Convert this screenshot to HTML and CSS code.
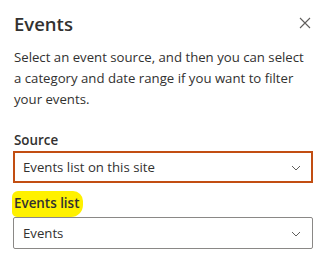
FILE: index.html
```html
<!DOCTYPE html>
<html lang="en">
<head>
    <meta charset="UTF-8">
    <meta name="viewport" content="width=device-width, initial-scale=1.0">
    <title>Events</title>
    <link rel="stylesheet" href="styles.css">
</head>
<body>
    <div class="panel">
        <!-- Header -->
        <div class="panel-header">
            <h2>Events</h2>
            <button class="close" aria-label="Close">
                <svg width="12" height="12" viewBox="0 0 12 12"><path d="M1 1 L11 11 M11 1 L1 11" stroke="#605e5c" stroke-width="1.1" fill="none"/></svg>
            </button>
        </div>

        <p class="intro">Select an event source, and then you can select a category and date range if you want to filter your events.</p>

        <div class="field field-source">
            <label>Source</label>
            <div class="dropdown dropdown-active">
                <span>Events list on this site</span>
                <svg class="chevron" width="10" height="6" viewBox="0 0 10 6"><path d="M1 1 L5 5 L9 1" stroke="#605e5c" stroke-width="1" fill="none"/></svg>
            </div>
        </div>

        <div class="field field-list">
            <label><span class="marker">Events list</span></label>
            <div class="dropdown">
                <span>Events</span>
                <svg class="chevron" width="10" height="6" viewBox="0 0 10 6"><path d="M1 1 L5 5 L9 1" stroke="#605e5c" stroke-width="1" fill="none"/></svg>
            </div>
        </div>
    </div>
</body>
</html>
```

FILE: styles.css
```css
body { margin: 0; background: #fff; font-family: "Open Sans", "Noto Sans", Arial, sans-serif; color: #323130; }
.panel { padding: 8px 12px 0 13px; }
.panel-header { display: flex; align-items: center; justify-content: space-between; height: 30px; }
.panel-header h2 { margin: 0 0 0 1px; font-size: 18.5px; font-weight: 600; color: #323130; }
.close { border: none; background: none; padding: 0; margin-right: 2px; cursor: pointer; display: flex; }
.intro { margin: 9px 0 0 1px; font-size: 13.2px; line-height: 21px; color: #323130; }
.field { display: flex; flex-direction: column; }
.field-source { margin-top: 20px; }
.field-list { margin-top: 10px; }
.field label { font-size: 13.4px; font-weight: 600; line-height: 20px; margin: 0 0 1px 1px; }
.field-list label { margin-bottom: 4px; }
.marker { background: #fff100; padding: 3px 4px 5px 2px; margin-left: -2px; border-radius: 6px 10px 12px 5px; }
.dropdown { display: flex; align-items: center; justify-content: space-between; height: 30px; border: 1px solid #8a8886; border-radius: 2px; padding: 0 11px 0 9px; font-size: 13.2px; }
.dropdown-active { border: 2px solid #c24e12; padding: 0 10px 0 8px; height: 28px; border-radius: 0; }
.chevron { margin-top: 1px; }
```
